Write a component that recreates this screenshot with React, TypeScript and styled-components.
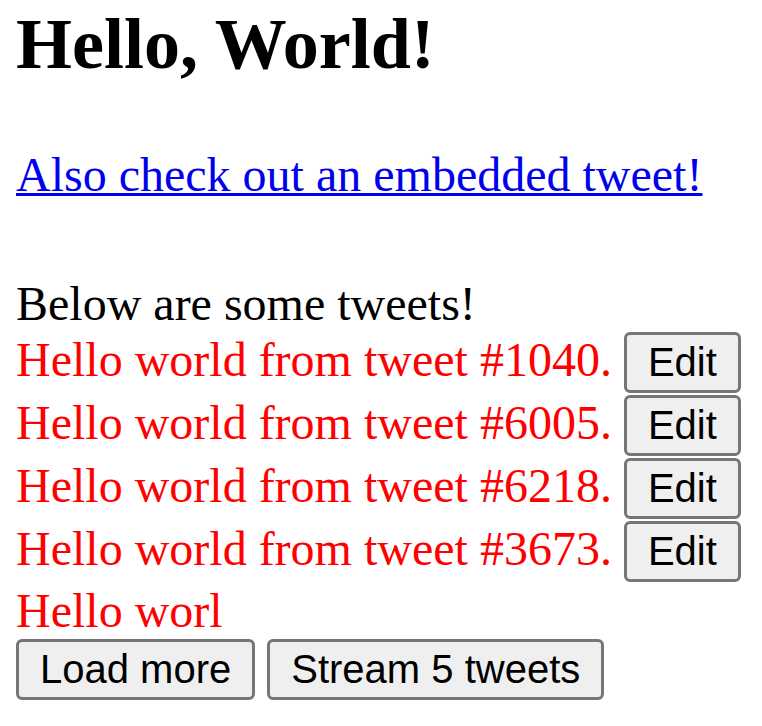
import styled, { createGlobalStyle } from "styled-components";

const GlobalStyle = createGlobalStyle`
  body {
    margin: 0;
    background: #fff;
    color: #000;
    font-family: "Liberation Serif", "Times New Roman", serif;
    font-size: 48px;
    line-height: 55px;
  }
`;

const Page = styled.section`
  padding: 0 16px;
`;

const Title = styled.h1`
  margin: 3px 0 62px;
  font-size: 72px;
  font-weight: bold;
  line-height: 82px;
`;

const LinkLine = styled.p`
  margin: 0 0 74px;
  a {
    color: #0000ee;
    text-decoration: underline;
    text-decoration-thickness: 3px;
  }
`;

const Intro = styled.div``;

const TweetRow = styled.div`
  color: #ff0000;
`;

const Button = styled.button`
  display: inline-block;
  box-sizing: border-box;
  height: 61px;
  margin: 1px 0;
  padding: 0 21px;
  border: 3px solid #767676;
  border-radius: 6px;
  background: #efefef;
  color: #000;
  font-family: "Liberation Sans", Arial, sans-serif;
  font-size: 40px;
  line-height: 55px;
  vertical-align: baseline;
  cursor: pointer;
`;

const Actions = styled.div``;

const tweets = [1040, 6005, 6218, 3673];

export default function App() {
  return (
    <>
      <GlobalStyle />
      <Page>
        <Title>Hello, World!</Title>
        <LinkLine>
          <a href="#embed">Also check out an embedded tweet!</a>
        </LinkLine>
        <Intro>Below are some tweets!</Intro>
        {tweets.map((id) => (
          <TweetRow key={id}>
            Hello world from tweet #{id}. <Button>Edit</Button>
          </TweetRow>
        ))}
        <TweetRow>Hello worl</TweetRow>
        <Actions>
          <Button>Load more</Button> <Button>Stream 5 tweets</Button>
        </Actions>
      </Page>
    </>
  );
}
